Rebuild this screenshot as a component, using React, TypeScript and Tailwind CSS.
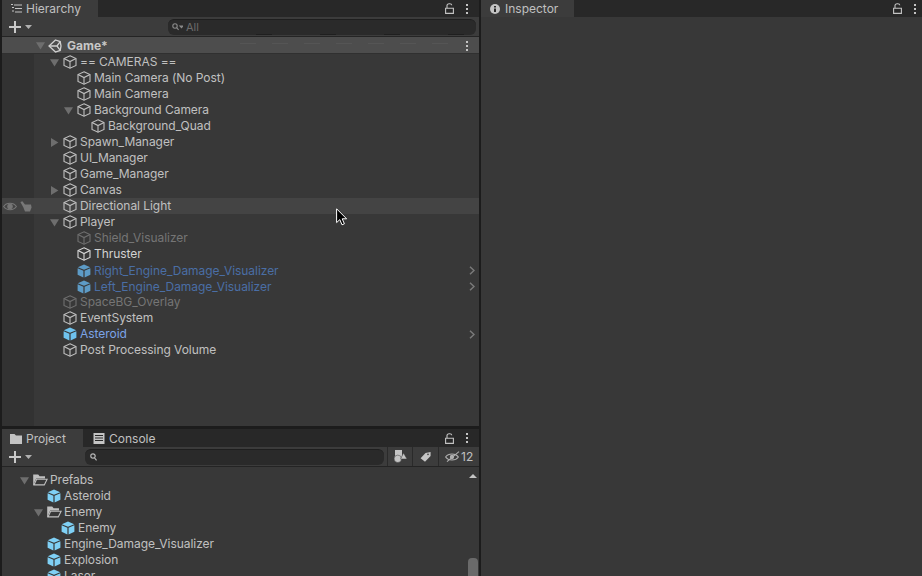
import { ReactNode } from "react";

const FONT = "[font-family:Inter,'Liberation_Sans',sans-serif]";

// Outline cube used for plain game objects
function Cube({ className = "text-[#c0c0c0]" }: { className?: string }) {
  return (
    <svg width="14" height="14" viewBox="0 0 14 14" fill="none" stroke="currentColor" strokeWidth="1.1" className={`shrink-0 ${className}`}>
      <path d="M7 .8 13 3.6V10.4L7 13.2 1 10.4V3.6Z" />
      <path d="M1 3.6 7 6.6 13 3.6M7 6.6V13.2" />
    </svg>
  );
}

// Filled cube for prefabs
function Prefab({ className = "text-[#7fd0f5]" }: { className?: string }) {
  return (
    <svg width="14" height="14" viewBox="0 0 14 14" fill="currentColor" className={`shrink-0 ${className}`}>
      <path d="M7 .6 13.2 3.2 7 5.8.8 3.2Z" />
      <path d="M.6 4.2 6.4 6.7V13.4L.6 10.8Z" />
      <path d="M13.4 4.2 7.6 6.7V13.4L13.4 10.8Z" />
    </svg>
  );
}

function Folder() {
  return (
    <svg width="15" height="12" viewBox="0 0 15 12" className="shrink-0">
      <path d="M.2 .6H5.2L6.6 2.2H12V4.4H3.2L1.4 8.4V11H.2Z" fill="#c0c0c0" />
      <path d="M1 10.9 3.6 5.2H14.1L11.3 10.9Z" fill="#383838" stroke="#c0c0c0" strokeWidth="1.1" />
    </svg>
  );
}

function Arrow({ open }: { open: boolean }) {
  return (
    <svg width="9" height="9" viewBox="0 0 9 9" fill="#6e6e6e" className="shrink-0">
      {open ? <path d="M0 1.2H9L4.5 8.6Z" /> : <path d="M1 0V9L8.4 4.5Z" />}
    </svg>
  );
}

function Lock() {
  return (
    <svg width="9" height="11" viewBox="0 0 9 11" fill="none" stroke="#c4c4c4" strokeWidth="1.1">
      <path d="M.6 5.2H8.4V10.4H.6Z" />
      <path d="M2 5V2.6C2 .4 6.6.2 6.8 2.2" />
    </svg>
  );
}

function Dots() {
  return (
    <div className="flex w-[2px] flex-col gap-[2px]">
      <div className="h-[2px] w-[2px] bg-[#c4c4c4]" />
      <div className="h-[2px] w-[2px] bg-[#c4c4c4]" />
      <div className="h-[2px] w-[2px] bg-[#c4c4c4]" />
    </div>
  );
}

function Plus() {
  return (
    <div className="flex items-center gap-[4px]">
      <svg width="12" height="12" viewBox="0 0 12 12" fill="#c8c8c8">
        <path d="M5 0H7V5H12V7H7V12H5V7H0V5H5Z" />
      </svg>
      <svg width="7" height="4" viewBox="0 0 7 4" fill="#b0b0b0">
        <path d="M0 0H7L3.5 4Z" />
      </svg>
    </div>
  );
}

function Chevron() {
  return (
    <svg width="6" height="9" viewBox="0 0 6 9" fill="none" stroke="#7a7a7a" strokeWidth="1.5" className="absolute right-[4px]">
      <path d="M1 .7 5 4.5 1 8.3" />
    </svg>
  );
}

type Item = {
  name: string;
  depth: number;
  open?: boolean;
  kind?: "plain" | "dim" | "bright" | "broken" | "active";
  more?: boolean;
  hover?: boolean;
};

const hierarchy: Item[] = [
  { name: "== CAMERAS ==", depth: 0, open: true },
  { name: "Main Camera (No Post)", depth: 1 },
  { name: "Main Camera", depth: 1 },
  { name: "Background Camera", depth: 1, open: true },
  { name: "Background_Quad", depth: 2 },
  { name: "Spawn_Manager", depth: 0, open: false },
  { name: "UI_Manager", depth: 0 },
  { name: "Game_Manager", depth: 0 },
  { name: "Canvas", depth: 0, open: false },
  { name: "Directional Light", depth: 0, hover: true },
  { name: "Player", depth: 0, open: true },
  { name: "Shield_Visualizer", depth: 1, kind: "dim" },
  { name: "Thruster", depth: 1, kind: "bright" },
  { name: "Right_Engine_Damage_Visualizer", depth: 1, kind: "broken", more: true },
  { name: "Left_Engine_Damage_Visualizer", depth: 1, kind: "broken", more: true },
  { name: "SpaceBG_Overlay", depth: 0, kind: "dim" },
  { name: "EventSystem", depth: 0 },
  { name: "Asteroid", depth: 0, kind: "active", more: true },
  { name: "Post Processing Volume", depth: 0 },
];

const textColor = {
  plain: "text-[#c0c0c0]",
  dim: "text-[#757575]",
  bright: "text-[#d2d2d2]",
  broken: "text-[#4a6ea5]",
  active: "text-[#7ba4e8]",
};

function HierarchyRow({ item }: { item: Item }) {
  const kind = item.kind ?? "plain";
  return (
    <div className={`relative flex h-4 items-center ${item.hover ? "bg-[#444444]" : ""}`}>
      <div className={`flex h-4 w-8 shrink-0 items-center gap-[3px] pl-[1px] ${item.hover ? "bg-[#434343]" : "bg-[#323232]"}`}>
        {item.hover && (
          <>
            <svg width="14" height="9" viewBox="0 0 14 9" fill="none" stroke="#777777" strokeWidth="1.1">
              <path d="M.6 4.5C3.5.2 10.5.2 13.4 4.5 10.5 8.8 3.5 8.8.6 4.5Z" />
              <circle cx="7" cy="4.5" r="2.2" fill="#777777" />
            </svg>
            <svg width="12" height="11" viewBox="0 0 12 11" fill="#777777">
              <path d="M.4 1 2.4.2 5 3.6H11L11.6 6.6 10 10.6H5L3.4 6.6Z" />
            </svg>
          </>
        )}
      </div>
      <div
        className={`flex items-center tracking-[-0.05px] ${kind === "broken" ? "mt-[2px]" : ""}`}
        style={{ paddingLeft: 15 + item.depth * 14 }}
      >
        <div className="flex w-[14px] shrink-0 items-center pl-[1px]">
          {item.open !== undefined && <Arrow open={item.open} />}
        </div>
        {kind === "broken" ? (
          <Prefab className="text-[#5d9bc6]" />
        ) : kind === "active" ? (
          <Prefab className="text-[#6fc3ee]" />
        ) : (
          <Cube className={kind === "dim" ? "text-[#6f6f6f]" : kind === "bright" ? "text-[#d8d8d8]" : "text-[#c0c0c0]"} />
        )}
        <span className={`ml-[3px] ${textColor[kind]}`}>{item.name}</span>
      </div>
      {item.more && <Chevron />}
    </div>
  );
}

type ProjectItem = { name: string; depth: number; folder?: boolean };

const project: ProjectItem[] = [
  { name: "Prefabs", depth: 0, folder: true },
  { name: "Asteroid", depth: 1 },
  { name: "Enemy", depth: 1, folder: true },
  { name: "Enemy", depth: 2 },
  { name: "Engine_Damage_Visualizer", depth: 1 },
  { name: "Explosion", depth: 1 },
  { name: "Laser", depth: 1 },
];

function ProjectRow({ item }: { item: ProjectItem }) {
  return (
    <div className="flex h-4 shrink-0 items-center tracking-[-0.05px]" style={{ paddingLeft: 18 + item.depth * 14 }}>
      <div className="flex w-[13px] shrink-0 items-center">{item.folder && <Arrow open />}</div>
      {item.folder ? <Folder /> : <Prefab />}
      <span className={`text-[#c0c0c0] ${item.folder ? "ml-[2px]" : "ml-[3px]"}`}>{item.name}</span>
    </div>
  );
}

function Tab({ icon, label, active, className }: { icon: ReactNode; label: string; active?: boolean; className: string }) {
  return (
    <div className={`flex h-full items-center gap-[4px] ${active ? "bg-[#3c3c3c]" : ""} ${className}`}>
      {icon}
      <span className="text-[#c0c0c0]">{label}</span>
    </div>
  );
}

export default function App() {
  return (
    <div className={`flex h-[576px] w-[922px] overflow-hidden bg-[#1c1c1c] pl-[2px] text-[12px] leading-4 ${FONT}`}>
      {/* Left column */}
      <div className="flex w-[477px] shrink-0 flex-col">
        {/* Hierarchy */}
        <div className="flex h-[426px] shrink-0 flex-col bg-[#383838]">
          <div className="flex h-[17px] shrink-0 items-center bg-[#282828] pr-[11px]">
            <Tab
              active
              className="w-[96px] pl-[9px]"
              label="Hierarchy"
              icon={
                <svg width="11" height="9" viewBox="0 0 11 9" fill="none" stroke="#c4c4c4" strokeWidth="1">
                  <path d="M3 1H11M4 4.5H11M4 8H11M0 .5H2M1 3.5H3M1 7H3" />
                </svg>
              }
            />
            <div className="ml-auto flex items-center gap-[12px]">
              <Lock />
              <Dots />
            </div>
          </div>
          <div className="flex h-[20px] shrink-0 items-center border-b border-[#242424] bg-[#3c3c3c] pl-[7px] pr-[3px]">
            <Plus />
            <div className="relative ml-[136px] flex h-[16px] flex-1 items-center gap-[3px] rounded-[6px] border-t border-[#1f1f1f] bg-[#2a2a2a] pl-[4px] text-[11px]">
              <svg width="11" height="8" viewBox="0 0 11 8" fill="none" stroke="#8a8a8a" strokeWidth="1.1">
                <circle cx="3" cy="3" r="2.2" />
                <path d="M4.6 4.6 6.6 6.8M8 3H11L9.5 4.6Z" />
              </svg>
              <span className="text-[#6c6c6c]">All</span>
              <div className="absolute bottom-0 left-[88px] h-[1px] w-[208px] bg-[repeating-linear-gradient(90deg,#1f1f1f_0_16px,transparent_16px_64px)]" />
            </div>
          </div>
          <div className="relative flex h-[17px] shrink-0 items-center border-b border-[#303030] bg-[#4d4d4d] pl-[34px] pr-[11px] pt-[1px]">
            <Arrow open />
            <svg width="14" height="14" viewBox="0 0 14 14" fill="none" stroke="#d0d0d0" strokeWidth="1.3" className="ml-[3px] shrink-0">
              <path d="M7.5 1 12.2 2.6 13 7 12.2 11.4 7.5 13 1 7Z" />
              <path d="M1 7H9L12.2 2.6M9 7 12.2 11.4" />
            </svg>
            <span className="ml-[5px] font-bold text-[#c8c8c8]">Game*</span>
            <div className="ml-auto">
              <Dots />
            </div>
            <div className="absolute left-[238px] top-[6px] h-[1px] w-[208px] bg-[repeating-linear-gradient(90deg,#555555_0_16px,transparent_16px_32px)]" />
          </div>
          {hierarchy.map((item) => (
            <HierarchyRow key={item.name} item={item} />
          ))}
          <div className="flex flex-1">
            <div className="w-8 bg-[#323232]" />
          </div>
        </div>

        <div className="h-[3px] shrink-0 bg-[#1c1c1c]" />

        {/* Project */}
        <div className="flex min-h-0 flex-1 flex-col bg-[#383838]">
          <div className="flex h-[18px] shrink-0 items-center bg-[#282828] pr-[11px]">
            <Tab
              active
              className="w-[81px] pl-[8px] pt-[1px]"
              label="Project"
              icon={
                <svg width="12" height="10" viewBox="0 0 12 10" fill="#c4c4c4">
                  <path d="M0 0H4.5L6 1.5H12V10H0Z" />
                </svg>
              }
            />
            <Tab
              className="ml-[10px] pt-[1px]"
              label="Console"
              icon={
                <svg width="12" height="11" viewBox="0 0 12 11" fill="#c4c4c4">
                  <path d="M.5 0H11.5V11H.5ZM2 2V3H10V2ZM2 4.5V5.5H10V4.5ZM2 7V8H10V7Z" fillRule="evenodd" />
                </svg>
              }
            />
            <div className="ml-auto flex items-center gap-[12px]">
              <Lock />
              <Dots />
            </div>
          </div>
          <div className="flex h-[20px] shrink-0 items-center border-b border-[#242424] bg-[#3c3c3c] pl-[7px]">
            <Plus />
            <div className="ml-[53px] flex h-[16px] w-[299px] items-center rounded-[6px] border-t border-[#1f1f1f] bg-[#2a2a2a] pl-[5px]">
              <svg width="7" height="8" viewBox="0 0 7 8" fill="none" stroke="#b8b8b8" strokeWidth="1.2">
                <circle cx="3" cy="3" r="2.2" />
                <path d="M4.5 4.8 6.6 7.4" />
              </svg>
            </div>
            <div className="ml-[3px] flex h-full flex-1 items-center">
              <div className="flex h-full w-[26px] items-center justify-center border-x border-[#2a2a2a]">
                <svg width="13" height="13" viewBox="0 0 13 13" fill="#c4c4c4">
                  <path d="M1 0H8V7H1Z" />
                  <circle cx="3.8" cy="8.8" r="3.7" stroke="#3c3c3c" strokeWidth=".5" />
                  <path d="M9.5 3 13 9H6.5Z" stroke="#3c3c3c" strokeWidth=".5" />
                </svg>
              </div>
              <div className="flex h-full w-[26px] items-center justify-center border-r border-[#2a2a2a]">
                <svg width="11" height="10" viewBox="0 0 11 10" fill="#c4c4c4">
                  <path d="M5.5 1 10.6 0 10.6 4 5 9.8 .6 6.2ZM8 1.6A.8.8 0 1 0 8 3.2.8.8 0 1 0 8 1.6Z" fillRule="evenodd" />
                </svg>
              </div>
              <div className="flex flex-1 items-center gap-[1px] pl-[6px]">
                <svg width="15" height="11" viewBox="0 0 15 11" fill="none" stroke="#b0b0b0" strokeWidth="1.1">
                  <path d="M.6 6C3.5 2 10.5 2 13.4 6 10.5 10 3.5 10 .6 6Z" />
                  <circle cx="7" cy="6" r="1.6" fill="#b0b0b0" />
                  <path d="M2 10.6 14 .6" />
                </svg>
                <span className="text-[#c0c0c0]">12</span>
              </div>
            </div>
          </div>
          <div className="relative min-h-0 flex-1 overflow-hidden pt-[5px]">
            {project.map((item, i) => (
              <ProjectRow key={i} item={item} />
            ))}
            <svg width="8" height="4" viewBox="0 0 8 4" fill="#c4c4c4" className="absolute right-[2px] top-[7px]">
              <path d="M4 0 8 4H0Z" />
            </svg>
            <div className="absolute bottom-0 right-[1px] h-[18px] w-[10px] rounded-t-[4px] bg-[#6a6a6a]" />
          </div>
        </div>
      </div>

      <div className="w-[2px] shrink-0" />

      {/* Inspector */}
      <div className="flex min-w-0 flex-1 flex-col bg-[#383838]">
        <div className="flex h-[17px] shrink-0 items-center bg-[#282828] pr-[6px]">
          <Tab
            active
            className="w-[93px] pl-[9px]"
            label="Inspector"
            icon={
              <svg width="10" height="10" viewBox="0 0 10 10" className="mr-[1px]">
                <circle cx="5" cy="5" r="5" fill="#c4c4c4" />
                <path d="M4 2H6V3.6H4ZM4 4.6H6V8H4Z" fill="#2a2a2a" />
              </svg>
            }
          />
          <div className="ml-auto flex items-center gap-[12px]">
            <Lock />
            <Dots />
          </div>
        </div>
      </div>

      {/* Mouse cursor */}
      <svg width="12" height="18" viewBox="0 0 12 18" className="absolute left-[336px] top-[208px]">
        <path d="M.6.8V14.6L3.8 11.6 6 16.8 8.4 15.8 6.2 10.8H10.6Z" fill="#000" stroke="#fff" strokeWidth="1" />
      </svg>
    </div>
  );
}
